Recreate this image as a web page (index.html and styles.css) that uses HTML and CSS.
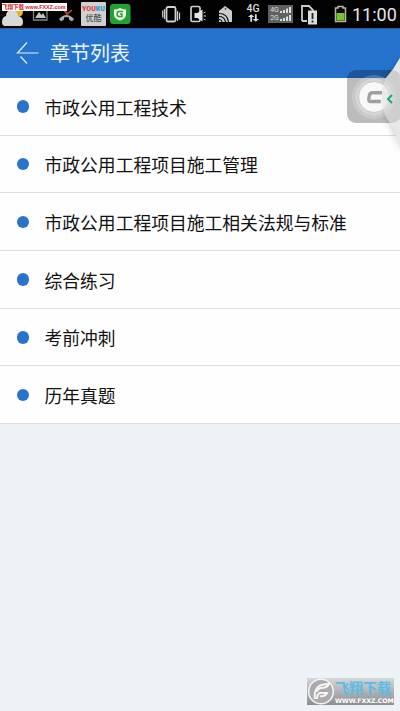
FILE: index.html
```html
<!DOCTYPE html>
<html lang="zh-CN">
<head>
<meta charset="utf-8">
<title>章节列表</title>
<link rel="stylesheet" href="styles.css">
</head>
<body>
<div class="status">
  <svg viewBox="0 0 26 28"><circle cx="18" cy="12" r="5" fill="#e5b52d"/><path d="M2 22q0-5 4-6 0-6 6-6 5 0 6 6 5 1 5 6 0 4-3 4H5q-3 0-3-4z" fill="#d9d9d5"/></svg>
  <svg viewBox="26 0 28 28"><path d="M33.500 9v11h13.500V9" fill="none" stroke="#858585" stroke-width="1.300"/><path d="M35 18l4-6 2.500 3 1.500-2 3 5z" fill="#c4c4c4"/></svg>
  <svg viewBox="54 0 24 28"><path d="M59 19q7.500-8 15 0l-2 2.500-3-2v-2q-3-1-5 0v2l-3 2z" fill="#aaa"/><path d="M64 10l3 4 5-4" fill="none" stroke="#d34130" stroke-width="1.600"/></svg>
  <div class="youku"><b>YOU<i>KU</i></b><span>优酷</span></div>
  <svg viewBox="108 0 48 28"><rect x="110" y="4" width="20.500" height="20" rx="3" fill="#22a32d"/><path d="M120 8q3 1.500 6 1.500v5q0 4-6 6-6-2-6-6v-5q3 0 6-1.500z" fill="#eefbee"/><path d="M123 11.500h-4q-2 0-2 2.500t2 2.500h3V14h-2" fill="none" stroke="#22a32d" stroke-width="1.400"/></svg>
  <svg viewBox="156 0 30 28"><g fill="none" stroke="#d0d0d0"><rect x="166.500" y="7" width="9" height="14.500" rx="1.500" stroke-width="1.800"/><path d="M164.500 9v10M177.500 11v10M162.700 10.500v7M179.500 12.500v7" stroke-width="1.200"/></g></svg>
  <svg viewBox="186 0 26 28"><rect x="191" y="6.500" width="9" height="15" rx="1.500" fill="none" stroke="#d0d0d0" stroke-width="1.700"/><path d="M194.500 13h3l5-3.500v12L197.500 18h-3z" fill="#e5e5e5"/><path d="M203.500 13l2-1M203.500 16h2.500M203.500 19l2 1" stroke="#ccc"/></svg>
  <svg viewBox="212 0 28 28"><path d="M219 11l6-5 7 5v11h-13z" fill="#ccc"/><circle cx="225.500" cy="9" r=".8" fill="#111"/><path d="M219 13.500q8.500 0 9.500 8.500M219 16.500q5.500 0 6.500 5.500M219 19.500q2.500 0 3 2.500" fill="none" stroke="#111" stroke-width="1.200"/></svg>
  <div class="net"><span>4G</span><svg viewBox="0 0 12 8"><path d="M3.500 0L0 3h2.500v5h2V3H7zM7.500 0h2v5H12L8.500 8 5 5h2.500z" fill="#ddd"/></svg></div>
  <div class="sims">
    <div><span>4G</span><svg viewBox="0 0 11 6"><path d="M0 4h2v2H0zM3 3h2v3H3zM6 1.500h2V6H6zM9 0h2v6H9z" fill="#ddd"/></svg></div>
    <div><span>2G</span><svg viewBox="0 0 11 6"><path d="M0 4h2v2H0zM3 3h2v3H3zM6 1.500h2V6H6zM9 0h2v6H9z" fill="#ddd"/></svg></div>
  </div>
  <svg viewBox="294 0 34 28"><path d="M302 21V6h7l4 4v4M302 21h5" fill="none" stroke="#ccc" stroke-width="1.800"/><rect x="308" y="10.500" width="9" height="14" fill="#ddd"/><path d="M312.500 13v6M312.500 20.500v2" stroke="#222" stroke-width="1.800"/></svg>
  <svg viewBox="328 0 23 28"><path d="M338 6.500h5v1.500h2.500v13.500h-10V8h2.500z" fill="#0a0a0a" stroke="#b6b89c" stroke-width="1.500"/><path d="M336.500 13h8v7.500h-8z" fill="#76c52e"/></svg>
  <time>11:00</time>
  <div class="tag">飞翔下载 <b>www.FXXZ.com</b></div>
</div>
<header>
  <svg viewBox="0 0 24 24"><path d="M11 1.500L1.500 12H22.500M11 22.500l-6.500-7" fill="none" stroke="#e3effb" stroke-width="1.200"/></svg>
  <h1>章节列表</h1>
</header>
<ul>
  <li>市政公用工程技术</li>
  <li>市政公用工程项目施工管理</li>
  <li>市政公用工程项目施工相关法规与标准</li>
  <li>综合练习</li>
  <li>考前冲刺</li>
  <li>历年真题</li>
</ul>
<svg class="assist" viewBox="340 50 60 110">
  <defs>
    <filter id="soft" x="-50%" width="200%"><feGaussianBlur stdDeviation="4"/></filter>
  </defs>
  <path d="M402 60Q394 70 388 79Q380 98 388 117Q396 131 402 150z" fill="#000" opacity=".3" filter="url(#soft)"/>
  <path d="M400 58Q394 69 386 78Q377 98 386 117Q396 131 400 149z" fill="#eee"/>
  <rect x="347" y="70" width="54" height="53" rx="9" fill="#000" fill-opacity=".26"/>
  <circle cx="374" cy="97" r="22" fill="#fff" fill-opacity=".2"/>
  <circle cx="374" cy="97" r="18.500" fill="#fff" fill-opacity=".25"/>
  <circle cx="374" cy="97" r="15.500" fill="#f8f8f8" stroke="#c8c8c8"/>
  <path d="M400 58Q394 69 386 78Q377 98 386 117Q396 131 400 149z" fill="#e2e2e2" opacity=".6"/>
  <path d="M382 92.700h-9.500q-2.500 0-3 2.300l-.7 3.500q-.5 3 2 3h10" fill="none" stroke="#a0a0a0" stroke-width="3.400"/>
  <path d="M392 95l-4 4 4 4" fill="none" stroke="#18a783" stroke-width="2"/>
</svg>
<div class="mark">
  <svg viewBox="0 0 28 27"><circle cx="14" cy="13.500" r="12.300" fill="#aaa" stroke="#f5f5f5" stroke-width="1.500"/><path d="M8 21q-1-7 2-11 3-4 12-4-2 4-8 4-4 1-4 4M10 21q0-5 3-6h7q-2 4-7 3" fill="none" stroke="#f5f5f5" stroke-width="2"/></svg>
  <div><b>飞翔下载</b><span>WWW.FXXZ.COM</span></div>
</div>
</body>
</html>
```
FILE: styles.css
```css
* { box-sizing: border-box; }
body {
  margin: 0;
  height: 711px;
  overflow: hidden;
  position: relative;
  background: #edf2f6;
  font-family: "Noto Sans CJK SC", sans-serif;
}
svg { display: block; }
.status {
  position: relative;
  height: 28px;
  background: #020202;
  display: grid;
  grid-template-columns: 26px 28px 24px 30px 48px 30px 26px 28px 26px 28px 34px 23px 49px;
  color: #ddd;
}
.status > svg { width: 100%; height: 28px; }
.youku {
  width: 25px;
  height: 24px;
  margin: 2px 0 0 3px;
  border-radius: 1px;
  background: #d0d0d0;
  display: flex;
  flex-direction: column;
  align-items: center;
  padding-top: 3px;
}
.youku b { font: 900 7px/8px Roboto, sans-serif; color: #d8433c; }
.youku i { font-style: normal; color: #2e97cf; }
.youku span { font-size: 8px; line-height: 10px; font-weight: 500; color: #555; }
.net { display: flex; flex-direction: column; align-items: center; padding-top: 4px; }
.net span { font: 500 10.5px/10px Roboto, sans-serif; }
.net svg { width: 11px; height: 8px; }
.sims {
  width: 25px;
  height: 18px;
  margin: 5px 0 0 2px;
  padding-top: 1px;
  background: #606060;
}
.sims div { display: flex; justify-content: center; align-items: center; gap: 1px; height: 8px; }
.sims span { font: 7px/8px Roboto, sans-serif; }
.sims svg { width: 11px; height: 6px; }
time { font: 18px/28px Roboto, sans-serif; padding: 1px 0 0 1px; white-space: nowrap; color: #e6e6e6; }
.tag {
  position: absolute;
  left: 2px;
  top: 3px;
  width: 65px;
  height: 8px;
  background: #fff;
  color: #d92027;
  font-size: 5.5px;
  line-height: 8px;
  font-weight: 700;
  white-space: nowrap;
  overflow: hidden;
}
.tag b { font-family: "Liberation Sans", sans-serif; font-size: 5.4px; }
header {
  height: 50px;
  background: #2673cd;
  border-top: 1px solid #24609f;
  display: flex;
  align-items: center;
  padding: 0 0 2px 16px;
}
header svg { width: 24px; height: 24px; }
h1 { margin: 0 0 0 10px; font-size: 20px; line-height: 28px; font-weight: 400; color: #edf5fd; }
ul { list-style: none; margin: 0; padding: 0; background: #fefefe; }
li {
  height: 57.7px;
  border-bottom: 1px solid #dedede;
  display: flex;
  align-items: center;
  padding: .4px 0 0 16.5px;
  font-size: 17.8px;
  color: #111;
}
li::before {
  content: "";
  width: 12.5px;
  height: 12.5px;
  margin-right: 15.5px;
  border-radius: 50%;
  background: #2874cd;
}
.assist { position: absolute; left: 340px; top: 50px; width: 60px; height: 110px; }
.mark {
  position: absolute;
  left: 307px;
  top: 678px;
  width: 87px;
  height: 27px;
  display: flex;
  background: linear-gradient(#d4d8db, #8c8e90);
}
.mark svg { width: 28px; height: 27px; flex: none; }
.mark div { display: flex; flex-direction: column; }
.mark b { font-size: 14px; line-height: 18px; height: 19px; color: #58bce6; white-space: nowrap; }
.mark span {
  font: 700 6.3px/7px "DejaVu Sans", sans-serif;
  color: #fff;
  white-space: nowrap;
  letter-spacing: -.1px;
}
```
